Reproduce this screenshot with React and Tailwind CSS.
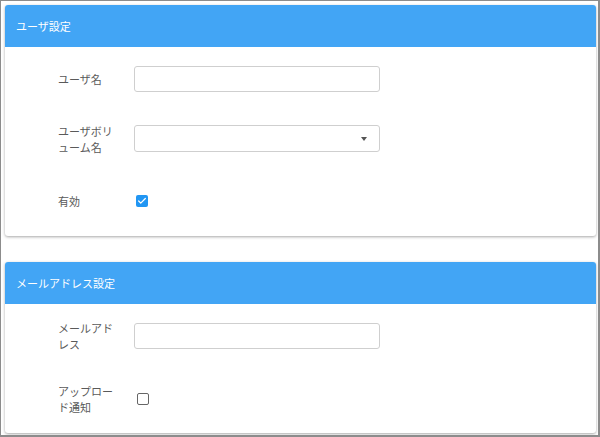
import { Check } from "lucide-react";

const font = {
  fontFamily: '"Noto Sans CJK JP", "Noto Sans", sans-serif',
};

function Card({ title, children, className = "" }) {
  return (
    <section
      className={`rounded-[3px] bg-white shadow-[0_1px_3px_rgba(0,0,0,0.35)] ${className}`}
    >
      <div className="flex h-[42px] items-center rounded-t-[3px] bg-[#42a5f5] pl-[11px] text-[11px] text-white">
        {title}
      </div>
      {children}
    </section>
  );
}

function Row({ label, children, className = "" }) {
  return (
    <div className={`flex items-center ${className}`}>
      <div className="w-[58px] pl-[53px] box-content text-[11px] leading-[16px] text-[#5a5a5a]">
        {label}
      </div>
      <div className="ml-[18px] flex items-center">{children}</div>
    </div>
  );
}

function TextInput() {
  return (
    <div className="h-[26px] w-[246px] rounded-[3px] border border-[#cfcfcf] bg-white" />
  );
}

function SelectBox() {
  return (
    <div className="flex h-[27px] w-[246px] items-center justify-end rounded-[3px] border border-[#cfcfcf] bg-white pr-[12px]">
      <div className="h-0 w-0 border-x-[3.5px] border-t-[4px] border-x-transparent border-t-[#555]" />
    </div>
  );
}

function CheckBox({ checked }) {
  if (checked) {
    return (
      <div className="ml-[2px] flex h-[12px] w-[12px] items-center justify-center rounded-[2px] bg-[#2196f3]">
        <Check size={10} strokeWidth={3} color="white" />
      </div>
    );
  }
  return (
    <div className="ml-[3px] h-[12px] w-[12px] rounded-[2px] border-[1.5px] border-[#666]" />
  );
}

export default function App() {
  return (
    <div
      className="h-[437px] w-[600px] overflow-hidden border-t border-l border-r-2 border-b-2 border-[#8c8c8c] bg-white px-[4px] pt-[4px]"
      style={font}
    >
      <Card title="ユーザ設定" className="w-[591px]">
        <div className="pt-[19px] pb-[22px]">
          <Row label="ユーザ名" className="h-[26px]">
            <TextInput />
          </Row>
          <Row label="ユーザボリューム名" className="mt-[33px] h-[27px]">
            <SelectBox />
          </Row>
          <Row label="有効" className="mt-[36px] h-[26px]">
            <CheckBox checked />
          </Row>
        </div>
      </Card>
      <Card title="メールアドレス設定" className="mt-[26px] w-[591px]">
        <div className="pt-[19px] pb-[21px]">
          <Row label="メールアドレス" className="h-[26px]">
            <TextInput />
          </Row>
          <Row label="アップロード通知" className="mt-[37px] h-[26px]">
            <CheckBox />
          </Row>
        </div>
      </Card>
    </div>
  );
}
